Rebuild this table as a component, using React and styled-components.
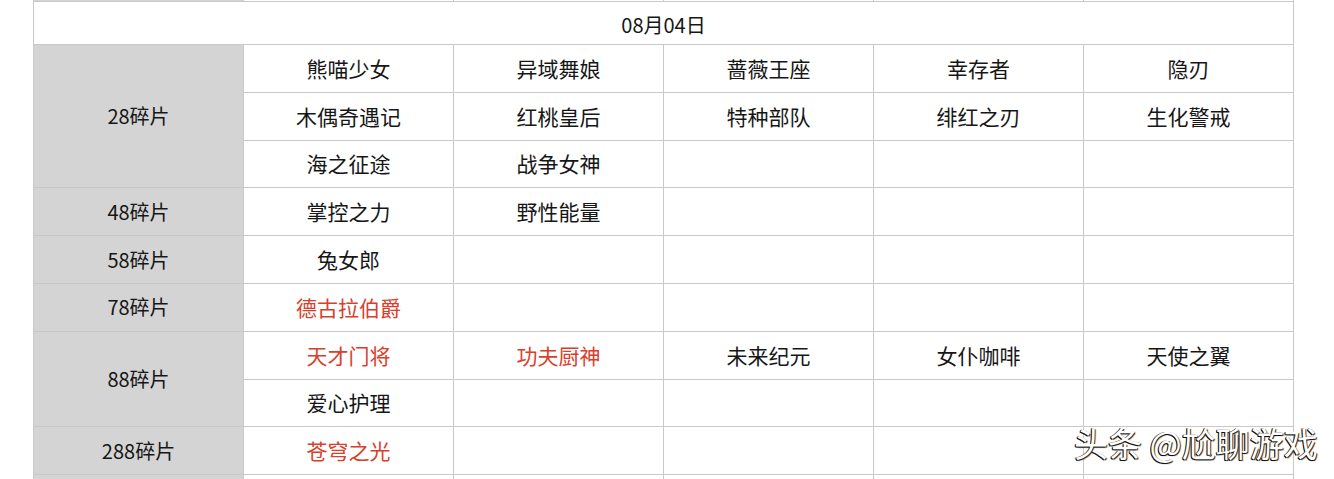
import React from 'react'
import styled, { createGlobalStyle } from 'styled-components'

const GlobalStyle = createGlobalStyle`
  html, body {
    margin: 0;
    padding: 0;
    background: #ffffff;
  }
  body {
    font-family: "Noto Sans CJK SC", "Noto Sans", sans-serif;
  }
`

const Page = styled.div`
  position: relative;
  width: 1334px;
  height: 479px;
  overflow: hidden;
  background: #fff;
`

const Sheet = styled.table`
  border-collapse: collapse;
  table-layout: fixed;
  width: 1261px;
  margin-left: 33px;
  margin-top: -46px;
  color: #161616;
  font-size: 21px;
`

const Row = styled.tr`
  height: ${p => p.$h || 47.8}px;
`

const Cell = styled.td`
  border: 1px solid #c9c9c9;
  text-align: center;
  vertical-align: middle;
  padding: 0;
  line-height: 1;
  background: ${p => (p.$label ? '#d4d4d4' : '#ffffff')};
  color: ${p => (p.$red ? '#d8402c' : 'inherit')};
  font-size: ${p => (p.$label ? '20px' : '21px')};
`

const Title = styled.td`
  border: 1px solid #c9c9c9;
  text-align: center;
  vertical-align: middle;
  padding: 3px 0 0;
  font-size: 20px;
  line-height: 1;
`

const Watermark = styled.div`
  position: absolute;
  left: 1074px;
  top: 423px;
  font-family: "Noto Sans CJK SC", sans-serif;
  font-size: 34px;
  line-height: 1.2;
  color: #ffffff;
  white-space: nowrap;
  text-shadow: -1px 1px 0 #111, 1px 1px 1px #222, -1px 0 0 #333;
`

const groups = [
  {
    label: '28碎片',
    rows: [
      ['熊喵少女', '异域舞娘', '蔷薇王座', '幸存者', '隐刃'],
      ['木偶奇遇记', '红桃皇后', '特种部队', '绯红之刃', '生化警戒'],
      ['海之征途', '战争女神', '', '', ''],
    ],
  },
  { label: '48碎片', rows: [['掌控之力', '野性能量', '', '', '']] },
  { label: '58碎片', rows: [['兔女郎', '', '', '', '']] },
  { label: '78碎片', rows: [['德古拉伯爵*', '', '', '', '']] },
  {
    label: '88碎片',
    rows: [
      ['天才门将*', '功夫厨神*', '未来纪元', '女仆咖啡', '天使之翼'],
      ['爱心护理', '', '', '', ''],
    ],
  },
  { label: '288碎片', rows: [['苍穹之光*', '', '', '', '']] },
  { label: '', rows: [['', '', '', '', '']] },
]

const App = () => {
  return (
    <Page>
      <GlobalStyle />
      <Sheet>
        <colgroup>
          {[0, 1, 2, 3, 4, 5].map(i => (
            <col key={i} style={{ width: 210 }} />
          ))}
        </colgroup>
        <tbody>
          <Row $h={47}>
            <Cell $label />
            <Cell />
            <Cell />
            <Cell />
            <Cell />
            <Cell />
          </Row>
          <Row $h={43}>
            <Title colSpan={6}>08月04日</Title>
          </Row>
          {groups.map(g =>
            g.rows.map((r, ri) => (
              <Row key={g.label + ri}>
                {ri === 0 && (
                  <Cell $label rowSpan={g.rows.length}>
                    {g.label}
                  </Cell>
                )}
                {r.map((name, ci) => {
                  const red = name.endsWith('*')
                  return (
                    <Cell key={ci} $red={red}>
                      {red ? name.slice(0, -1) : name}
                    </Cell>
                  )
                })}
              </Row>
            ))
          )}
        </tbody>
      </Sheet>
      <Watermark>头条 @尬聊游戏</Watermark>
    </Page>
  )
}

export default App
